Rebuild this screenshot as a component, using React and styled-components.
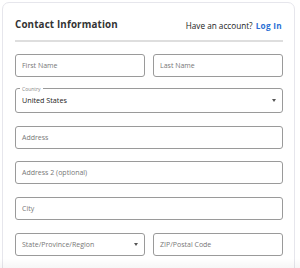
import React from 'react';
import styled, { createGlobalStyle } from 'styled-components';

const Global = createGlobalStyle`
  body {
    margin: 0;
    background: #ffffff;
    font-family: "Open Sans", "Liberation Sans", sans-serif;
  }
`;

const Frame = styled.main`
  position: relative;
  height: 268px;
  overflow: hidden;
  padding: 2px 0 0 2px;
  box-sizing: border-box;
  &::after {
    content: '';
    position: absolute;
    left: 0;
    right: 0;
    bottom: 0;
    height: 10px;
    background: linear-gradient(to bottom, rgba(0, 0, 0, 0), rgba(0, 0, 0, 0.035));
  }
`;

const Card = styled.section`
  width: 293px;
  height: 300px;
  box-sizing: border-box;
  border: 1px solid #e6e6ec;
  border-radius: 7px;
  padding: 0 11px 0 12px;
  background: #fff;
`;

const Header = styled.div`
  display: flex;
  align-items: flex-end;
  justify-content: space-between;
  height: 29px;
  padding-bottom: 8px;
  border-bottom: 2px solid #dedede;
`;

const Title = styled.h2`
  margin: 0 0 1px 0;
  font-size: 9.8px;
  font-weight: 700;
  color: #333;
  letter-spacing: 0.15px;
`;

const Account = styled.p`
  margin: 0 1px 1px 0;
  font-size: 8.2px;
  color: #222;
  a {
    color: #2b6fd4;
    font-weight: 700;
    text-decoration: none;
    margin-left: 3px;
    letter-spacing: 0.3px;
  }
`;

const Form = styled.div`
  display: flex;
  flex-direction: column;
  gap: 12.8px;
  padding-top: 12px;
`;

const Row = styled.div`
  display: flex;
  gap: 8px;
`;

const Field = styled.div`
  flex: 1;
  height: 23px;
  box-sizing: border-box;
  border: 1px solid #9a9a9a;
  border-radius: 3px;
  display: flex;
  align-items: center;
  padding: 0 4px 0 6px;
  font-size: 7px;
  color: #777;
`;

const Outlined = styled.fieldset`
  margin: -4px 0 0 0;
  flex: 1;
  height: 27px;
  box-sizing: border-box;
  border: 1px solid #9a9a9a;
  border-radius: 3px;
  padding: 0 4px 0 6px;
  display: flex;
  align-items: center;
  font-size: 7.2px;
  color: #222;
  legend {
    font-size: 5px;
    color: #888;
    padding: 0 2px;
    margin-left: -2px;
    line-height: 6px;
  }
`;

const Value = styled.span`
  flex: 1;
  margin-top: ${p => (p.$raised ? '-3px' : '0')};
`;

const Caret = styled.span`
  width: 0;
  height: 0;
  border-left: 2.5px solid transparent;
  border-right: 2.5px solid transparent;
  border-top: 3px solid #555;
  margin-right: 2px;
  margin-top: ${p => (p.$raised ? '-3px' : '0')};
`;

export default function App() {
  return (
    <>
      <Global />
      <Frame>
        <Card>
          <Header>
            <Title>Contact Information</Title>
            <Account>
              Have an account?<a href="#">Log In</a>
            </Account>
          </Header>
          <Form>
            <Row>
              <Field>First Name</Field>
              <Field>Last Name</Field>
            </Row>
            <Row>
              <Outlined>
                <legend>Country</legend>
                <Value $raised>United States</Value>
                <Caret $raised />
              </Outlined>
            </Row>
            <Row>
              <Field>Address</Field>
            </Row>
            <Row>
              <Field>Address 2 (optional)</Field>
            </Row>
            <Row>
              <Field>City</Field>
            </Row>
            <Row>
              <Field>
                <Value>State/Province/Region</Value>
                <Caret />
              </Field>
              <Field>ZIP/Postal Code</Field>
            </Row>
          </Form>
        </Card>
      </Frame>
    </>
  );
}
